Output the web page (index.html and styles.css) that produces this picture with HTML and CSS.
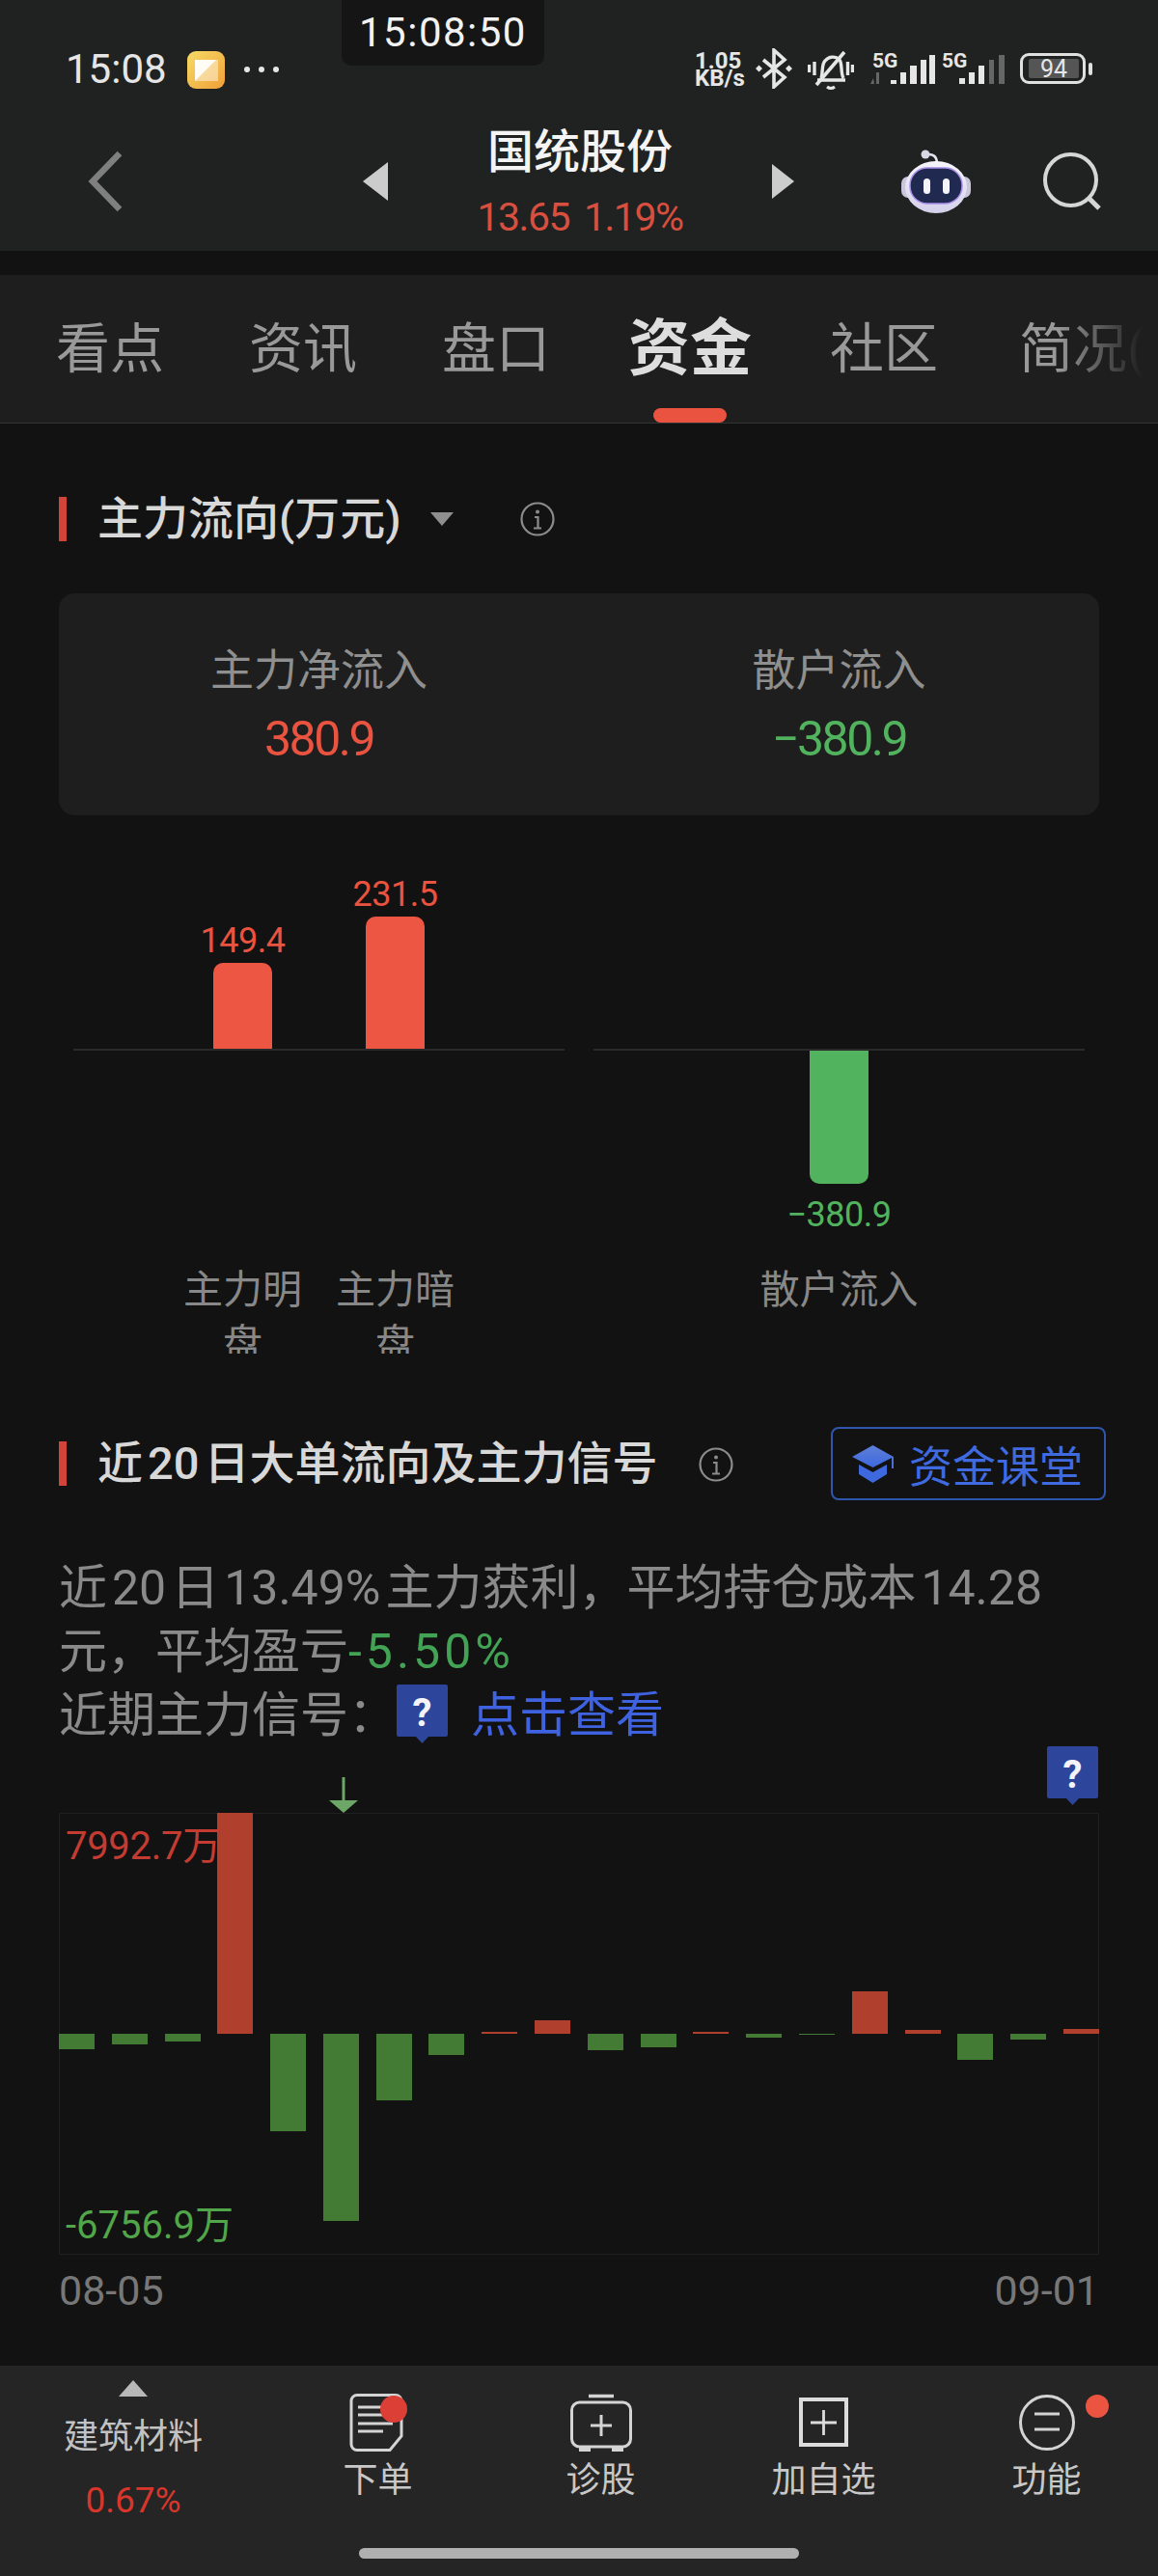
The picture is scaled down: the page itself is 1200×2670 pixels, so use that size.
FILE: index.html
```html
<!DOCTYPE html>
<html lang="zh-CN">
<head>
<meta charset="utf-8">
<title>国统股份</title>
<link rel="stylesheet" href="styles.css">
</head>
<body>
<div class="phone">
  <header class="top">
    <div class="clock-pill">15:08:50</div>
    <div class="status">
      <span class="status-time">15:08</span>
      <svg class="app-icon" width="39" height="39" viewBox="0 0 39 39">
        <defs><linearGradient id="appg" x1="0" y1="0" x2="1" y2="1"><stop offset="0" stop-color="#f7db66"/><stop offset="1" stop-color="#efa038"/></linearGradient></defs>
        <rect width="39" height="39" rx="9" fill="url(#appg)"/>
        <rect x="8" y="9" width="24" height="22" fill="#fff" fill-opacity=".45"/>
        <path d="M8 9h22L8 31z" fill="#fff" fill-opacity=".9"/>
      </svg>
      <span class="dots"><i></i><i></i><i></i></span>
      <div class="status-right">
        <span class="speed"><b>1.05</b><b>KB/s</b></span>
        <svg class="bt" width="38" height="42" viewBox="0 0 38 42" fill="none">
          <path d="M8 12l22 18-11 10V2l11 10L8 30" stroke="#e6e6e6" stroke-width="3.6"/>
          <path d="M3.500 17.500l3.500 3.500-3.500 3.500L0 21zM34.500 17.500l3.500 3.500-3.500 3.500-3.500-3.500z" fill="#e6e6e6"/>
        </svg>
        <svg class="bell" width="48" height="42" viewBox="0 0 48 42" fill="none" stroke="#e6e6e6" stroke-width="3.400">
          <path d="M14 29c2-5 0-14 4-18 4-5 11-5 15-1 3 4 1 14 4 19M10 31h29"/>
          <path d="M38 2L9 36" stroke-width="3.600"/>
          <path d="M1.500 15v8M7 12v14M41.500 12v14M46.500 15v8"/>
          <path d="M20 38q4 3 8 0" stroke-width="3"/>
        </svg>
        <svg class="signal" width="68" height="33" viewBox="0 0 68 33">
          <text x="3" y="16" class="fiveg">5G</text>
          <path d="M1 33l3-6 1 6zM7 21h3v12H7z" fill="#666"/>
          <path d="M22 29h6v4h-6zM32 21h6v12h-6zM42 14h7v19h-7zM53 8h6v25h-6zM62 3h6v30h-6z" fill="#e6e6e6"/>
        </svg>
        <svg class="signal second" width="68" height="33" viewBox="0 0 68 33">
          <text x="3" y="16" class="fiveg">5G</text>
          <path d="M21 27h6v6h-6zM31 21h6v12h-6zM41 14h6v19h-6z" fill="#e6e6e6"/>
          <path d="M52 8h5v25h-5zM62 3h6v30h-6z" fill="#666"/>
        </svg>
        <span class="battery"><span class="battery-fill">94</span></span>
        <i class="battery-nub"></i>
      </div>
    </div>
    <div class="stock-nav">
      <svg class="back" width="36" height="64" viewBox="0 0 36 64" fill="none"><path d="M33 3L5 32l28 29" stroke="#7f7f7f" stroke-width="6.500"/></svg>
      <i class="tri-left"></i>
      <div class="stock-title">
        <div class="stock-name">国统股份</div>
        <div class="stock-price"><span>13.65</span><span>1.19%</span></div>
      </div>
      <i class="tri-right"></i>
      <svg class="robot" width="72" height="66" viewBox="0 0 72 66">
        <defs><linearGradient id="helm" x1="0" y1="0" x2="0" y2="1"><stop offset="0" stop-color="#f6f5fc"/><stop offset="1" stop-color="#d3cfea"/></linearGradient></defs>
        <path d="M27 5q9-1 10 8" fill="none" stroke="#e4e3ee" stroke-width="2.500"/>
        <circle cx="25" cy="5" r="4.500" fill="#d8d7e4"/>
        <rect x="0" y="28" width="72" height="22" rx="7" fill="#c9c6dc"/>
        <ellipse cx="36" cy="39" rx="32" ry="27" fill="url(#helm)"/>
        <rect x="9" y="19" width="54" height="37" rx="18" fill="#20294f" stroke="#a88ee6" stroke-width="1.500"/>
        <rect x="23" y="30" width="7" height="16" rx="3.500" fill="#f3f3f8"/>
        <rect x="43" y="30" width="7" height="16" rx="3.500" fill="#f3f3f8"/>
      </svg>
      <svg class="search" width="60" height="60" viewBox="0 0 60 60" fill="none" stroke="#d6d6d6">
        <circle cx="28.500" cy="28.500" r="26.500" stroke-width="4"/>
        <path d="M47 47l11 11" stroke-width="5"/>
      </svg>
    </div>
  </header>

  <nav class="tabs">
    <a class="tab">看点</a>
    <a class="tab">资讯</a>
    <a class="tab">盘口</a>
    <a class="tab active">资金</a>
    <a class="tab">社区</a>
    <a class="tab last">简况(1)</a>
  </nav>

  <main class="content">
    <div class="section-head first">
      <i class="mark"></i>
      <h2 class="section-title large">主力流向(万元)</h2>
      <i class="caret"></i>
      <svg class="info" width="36" height="36" viewBox="0 0 36 36" fill="none" stroke="#8c8c8c" stroke-width="2.200">
        <circle cx="18" cy="18" r="16.500"/><path d="M15 16h3.500v11M14 27.500h8"/><circle cx="18" cy="10.500" r="2" fill="#8c8c8c" stroke="none"/>
      </svg>
    </div>

    <div class="summary">
      <div class="summary-col"><div class="summary-label">主力净流入</div><div class="summary-value red">380.9</div></div>
      <div class="summary-col"><div class="summary-label">散户流入</div><div class="summary-value green">−380.9</div></div>
    </div>

    <div class="flow-charts">
      <div class="panel">
        <div class="zone up">
          <div class="item"><span class="bar-value red">149.4</span><i class="flow-bar fill-red" style="height:89px"></i></div>
          <div class="item"><span class="bar-value red">231.5</span><i class="flow-bar fill-red" style="height:137px"></i></div>
        </div>
        <div class="axis"></div>
        <div class="zone down"></div>
        <div class="cats"><div class="cat">主力明盘</div><div class="cat">主力暗盘</div></div>
      </div>
      <div class="panel">
        <div class="zone up"></div>
        <div class="axis"></div>
        <div class="zone down">
          <div class="item"><i class="flow-bar neg fill-green" style="height:138px"></i><span class="bar-value green">−380.9</span></div>
        </div>
        <div class="cats"><div class="cat wide">散户流入</div></div>
      </div>
    </div>

    <div class="section-head second">
      <i class="mark"></i>
      <h2 class="section-title">近<span class="num-tight">20</span>日大单流向及主力信号</h2>
      <svg class="info spaced" width="36" height="36" viewBox="0 0 36 36" fill="none" stroke="#8c8c8c" stroke-width="2.200">
        <circle cx="18" cy="18" r="16.500"/><path d="M15 16h3.500v11M14 27.500h8"/><circle cx="18" cy="10.500" r="2" fill="#8c8c8c" stroke="none"/>
      </svg>
      <a class="course">
        <svg width="43" height="39" viewBox="0 0 43 39">
          <defs><linearGradient id="hat" x1="0" y1="0" x2="0" y2="1"><stop offset="0" stop-color="#5d80d8"/><stop offset="1" stop-color="#3e68de"/></linearGradient></defs>
          <path d="M21.500 0L43 12 21.500 23 0 12z" fill="url(#hat)"/>
          <path d="M7 20l14.500 8L36 20v10l-14.500 9L7 30z" fill="#3e68de"/>
          <path d="M42 12v12" stroke="#4a70d8" stroke-width="2"/>
        </svg>
        <span>资金课堂</span>
      </a>
    </div>

    <p class="signal-text">近<span class="num">20</span>日<span class="num">13.49%</span>主力获利，平均持仓成本<span class="num">14.28</span>元，平均盈亏<span class="deep-green">-5.50%</span><br>近期主力信号：<svg class="q-badge inline" width="53" height="61" viewBox="0 0 53 61"><path d="M2 0h49a2 2 0 0 1 2 2v50a2 2 0 0 1-2 2H33l-6.500 7-6.500-7H2a2 2 0 0 1-2-2V2a2 2 0 0 1 2-2z" fill="#2d459b"/><text x="26.500" y="43" class="q-mark">?</text></svg><a class="link">点击查看</a></p>

    <div class="plot">
      <svg class="arrow-mark" width="30" height="37" viewBox="0 0 30 37"><path d="M15 0v26" stroke="#6da768" stroke-width="3"/><path d="M0 24h30L15 37z" fill="#6da768"/></svg>
      <svg class="q-badge pinned" width="53" height="61" viewBox="0 0 53 61"><path d="M2 0h49a2 2 0 0 1 2 2v50a2 2 0 0 1-2 2H33l-6.500 7-6.500-7H2a2 2 0 0 1-2-2V2a2 2 0 0 1 2-2z" fill="#2d459b"/><text x="26.500" y="43" class="q-mark">?</text></svg>
      <span class="plot-label max">7992.7万</span>
      <span class="plot-label min">-6756.9万</span>
      <div class="bars">
        <div class="col neg"><i class="bar g" style="height:16px"></i></div>
        <div class="col neg"><i class="bar g" style="height:11px"></i></div>
        <div class="col neg"><i class="bar g" style="height:8px"></i></div>
        <div class="col pos"><i class="bar r" style="height:229px"></i></div>
        <div class="col neg"><i class="bar g" style="height:101px"></i></div>
        <div class="col neg"><i class="bar g" style="height:194px"></i></div>
        <div class="col neg"><i class="bar g" style="height:69px"></i></div>
        <div class="col neg"><i class="bar g" style="height:22px"></i></div>
        <div class="col pos"><i class="bar r" style="height:2px"></i></div>
        <div class="col pos"><i class="bar r" style="height:14px"></i></div>
        <div class="col neg"><i class="bar g" style="height:17px"></i></div>
        <div class="col neg"><i class="bar g" style="height:14px"></i></div>
        <div class="col pos"><i class="bar r" style="height:2px"></i></div>
        <div class="col neg"><i class="bar g" style="height:4px"></i></div>
        <div class="col neg"><i class="bar g" style="height:1px"></i></div>
        <div class="col pos"><i class="bar r" style="height:44px"></i></div>
        <div class="col pos"><i class="bar r" style="height:4px"></i></div>
        <div class="col neg"><i class="bar g" style="height:27px"></i></div>
        <div class="col neg"><i class="bar g" style="height:6px"></i></div>
        <div class="col pos"><i class="bar r" style="height:5px"></i></div>
      </div>
    </div>
    <div class="dates"><span>08-05</span><span>09-01</span></div>
  </main>

  <footer class="bottom">
    <div class="bottom-row">
      <div class="sector">
        <i class="tri-up"></i>
        <div class="sector-name">建筑材料</div>
        <div class="sector-change">0.67%</div>
      </div>
      <a class="action">
        <svg class="action-icon" width="60" height="60" viewBox="0 0 60 60" fill="none" stroke="#d4d4d4">
          <path d="M8 1.500h40a6 6 0 0 1 6 6V44L42 58.500H8a6 6 0 0 1-6-6v-45a6 6 0 0 1 6-6z" stroke-width="3"/>
          <path d="M9 14h36M9 22h36M9 31h36M9 39h26" stroke-width="2.800"/>
          <circle cx="46" cy="16" r="14" fill="#db3f36" stroke="none"/>
        </svg>
        <span>下单</span>
      </a>
      <a class="action">
        <svg class="action-icon" width="64" height="60" viewBox="0 0 64 60" fill="none" stroke="#d4d4d4">
          <path d="M19 2.500h26" stroke-width="3.500"/>
          <rect x="1.500" y="9" width="61" height="46" rx="8" stroke-width="3"/>
          <path d="M32 22v22M21 33h22" stroke-width="3"/>
          <path d="M9 58h12M43 58h12" stroke-width="4"/>
        </svg>
        <span>诊股</span>
      </a>
      <a class="action">
        <svg class="action-icon" width="51" height="60" viewBox="0 0 51 60" fill="none" stroke="#dcdcdc">
          <rect x="2" y="6" width="47" height="47" stroke-width="4"/>
          <path d="M25.500 17v26M12 30h27" stroke-width="2.800"/>
        </svg>
        <span>加自选</span>
      </a>
      <a class="action notify">
        <svg class="action-icon" width="58" height="60" viewBox="0 0 58 60" fill="none" stroke="#d4d4d4">
          <circle cx="29" cy="30" r="27.500" stroke-width="3"/>
          <path d="M16 21h26M16 37h26" stroke-width="3"/>
        </svg>
        <i class="dot"></i>
        <span>功能</span>
      </a>
    </div>
    <div class="home-indicator"></div>
  </footer>
</div>
</body>
</html>
```
FILE: styles.css
```css
* { box-sizing: border-box; }
html, body { margin: 0; padding: 0; background: #121212; }
body { font-family: Roboto, "Noto Sans CJK SC", sans-serif; }
a { display: block; }
i { display: block; }

.phone { width: 1200px; height: 2670px; display: flex; flex-direction: column; position: relative; overflow: hidden; background: #121212; }

/* header */
.top { height: 260px; background: #202222; flex: none; position: relative; }
.clock-pill { position: absolute; left: 354px; top: 0; width: 210px; height: 68px; background: #151515; border-radius: 0 0 10px 10px; color: #f2f2f2; font-size: 42px; line-height: 68px; text-align: center; letter-spacing: 1.500px; }
.status { height: 124px; padding: 52px 68px 0 68px; display: flex; align-items: flex-start; }
.status-time { font-size: 42px; line-height: 40px; color: #e6e6e6; width: 126px; flex: none; }
.app-icon { flex: none; margin-top: 1px; }
.dots { display: flex; gap: 9px; margin: 17px 0 0 20px; }
.dots i { width: 6px; height: 6px; border-radius: 50%; background: #e6e6e6; }
.status-right { margin-left: auto; display: flex; align-items: flex-start; }
.speed { display: flex; flex-direction: column; width: 52px; color: #e6e6e6; font-size: 24px; line-height: 18px; margin-top: 2px; white-space: nowrap; }
.speed b { display: block; font-weight: 700; }
.bt { margin: -2px 0 0 11px; }
.bell { margin: 0 0 0 16px; }
.signal { margin: 2px 0 0 16px; }
.signal.second { margin-left: 4px; }
.fiveg { font: 700 21px Roboto, sans-serif; fill: #e6e6e6; }
.battery { margin: 3px 0 0 16px; width: 68px; height: 32px; border: 3px solid #e0e0e0; border-radius: 9px; padding: 3px 6px; }
.battery-fill { display: block; width: 52px; height: 20px; background: #555; color: #e6e6e6; font-size: 25px; line-height: 21px; text-align: center; border-radius: 2px; }
.battery-nub { width: 4px; height: 13px; background: #e0e0e0; border-radius: 2px; margin: 13px 0 0 3px; }

.stock-nav { height: 136px; padding-bottom: 8px; display: flex; align-items: center; padding-left: 91px; }
.back { flex: none; }
.tri-left { margin-left: 249px; width: 0; height: 0; border-style: solid; border-width: 20px 26px 20px 0; border-color: transparent #cccccc transparent transparent; flex: none; }
.stock-title { width: 398px; flex: none; text-align: center; }
.stock-name { font-size: 48px; line-height: 62px; font-weight: 500; color: #f4f4f4; margin-top: 5px; }
.stock-price { margin-top: 6px; font-size: 41px; line-height: 60px; color: #d84f3f; display: flex; justify-content: center; gap: 15px; letter-spacing: -1.500px; }
.tri-right { width: 0; height: 0; border-style: solid; border-width: 18px 0 18px 23px; border-color: transparent transparent transparent #cccccc; flex: none; }
.robot { margin-left: 111px; flex: none; }
.search { margin-left: 75px; flex: none; }

/* tabs */
.tabs { margin-top: 25px; height: 154px; flex: none; background: #1e1e1e; border-bottom: 1px solid #333; display: flex; gap: 88px; padding-left: 58px; position: relative; overflow: hidden; white-space: nowrap; }
.tabs::after { content: ""; position: absolute; right: 0; top: 0; bottom: 0; width: 105px; background: linear-gradient(to right, rgba(30,30,30,0), #1e1e1e 85%); }
.tab { font-size: 56px; line-height: 90px; padding-top: 32px; color: #999; position: relative; height: 153px; flex: none; }
.tab.last { margin-left: -4px; }
.tab.active { font-size: 64px; font-weight: 700; color: #ddd; margin: 0 -7px; }
.tab.active::after { content: ""; position: absolute; left: 26px; width: 76px; height: 15px; bottom: 0; background: #e95340; border-radius: 8px; }

/* content */
.content { flex: 1; padding: 76px 61px 0; }
.section-head { display: flex; align-items: center; }
.section-head.first { height: 46px; }
.section-head.second { height: 76px; margin-top: 76px; }
.mark { width: 8px; height: 46px; background: #d2443a; flex: none; }
.section-title { margin: 0 0 0 32px; font-size: 47px; line-height: 46px; font-weight: 500; color: #d8d8d8; white-space: nowrap; }
.section-title.large { margin-left: 32px; }
.num-tight { margin: 0 5px; }
.caret { margin-left: 30px; width: 0; height: 0; border-style: solid; border-width: 14px 12px 0; border-color: #8f8f8f transparent transparent; flex: none; }
.info { margin-left: 69px; flex: none; }
.info.spaced { margin-left: 43px; margin-top: 2px; }
.course { margin-left: auto; margin-right: -7px; width: 285px; height: 76px; border: 2px solid #2f56ac; border-radius: 8px; display: flex; align-items: center; padding-left: 20px; gap: 16px; color: #3f6ae0; font-size: 45px; flex: none; }

.summary { margin-top: 54px; height: 230px; background: #1e1e1e; border-radius: 16px; display: grid; grid-template-columns: 1fr 1fr; text-align: center; padding-top: 59px; }
.summary-label { font-size: 45px; line-height: 44px; color: #8f8f8f; }
.summary-value { margin-top: 23px; font-size: 50px; line-height: 50px; letter-spacing: -2.500px; }
.red { color: #e95340; }
.green { color: #52b35f; }

.flow-charts { display: grid; grid-template-columns: 509px 509px; gap: 30px; padding-left: 15px; }
.zone { display: flex; justify-content: center; }
.zone.up { height: 242px; align-items: flex-end; }
.zone.down { height: 217px; align-items: flex-start; }
.axis { height: 2px; background: #2a2a2a; }
.item { width: 158px; display: flex; flex-direction: column; align-items: center; }
.flow-bar { width: 61px; border-radius: 10px 10px 0 0; margin-top: 3px; }
.flow-bar.neg { border-radius: 0 0 10px 10px; margin-top: 0; }
.fill-red { background: #ec5643; }
.fill-green { background: #52b35f; }
.bar-value { font-size: 36px; line-height: 40px; letter-spacing: -.5px; }
.flow-bar.neg + .bar-value { margin-top: 12px; }
.cats { display: flex; justify-content: center; height: 97px; overflow: hidden; padding-top: 3px; }
.cat { width: 158px; font-size: 41px; line-height: 56px; color: #888; text-align: center; }
.cat.wide { width: auto; white-space: nowrap; }

.signal-text { margin: 58px 0 0 0; font-size: 50px; line-height: 66px; color: #8a8a8a; height: 198px; }
.num { margin: 0 5px; }
.deep-green { color: #43a355; letter-spacing: 4px; }
.link { display: inline; color: #3f62e0; }
.q-badge { display: block; }
.q-badge.inline { display: inline-block; vertical-align: top; margin: 1px 24px 0 0; }
.q-mark { font: 700 40px Roboto, sans-serif; fill: #f4f4f8; text-anchor: middle; }

.plot { margin-top: 68px; height: 458px; position: relative; box-shadow: inset 0 0 0 1px #1f1f1f; }
.arrow-mark { position: absolute; left: 280px; top: -37px; }
.q-badge.pinned { position: absolute; right: 1px; top: -69px; }
.plot-label { position: absolute; left: 7px; font-size: 40px; line-height: 40px; white-space: nowrap; }
.plot-label.max { top: 15px; color: #c43c31; z-index: 1; letter-spacing: -.3px; }
.plot-label.min { top: 408px; color: #52a64a; }
.bars { display: flex; justify-content: space-between; height: 100%; }
.col { width: 37px; display: flex; flex-direction: column; }
.col.pos { padding-bottom: 229px; justify-content: flex-end; }
.col.neg { padding-top: 229px; }
.bar.r { background: #b03f2e; }
.bar.g { background: #437b35; }

.dates { margin-top: 17px; display: flex; justify-content: space-between; font-size: 43px; line-height: 40px; color: #777; }

/* bottom */
.bottom { height: 218px; flex: none; background: #252525; }
.bottom-row { display: flex; height: 189px; }
.sector { width: 276px; flex: none; display: flex; flex-direction: column; align-items: center; padding-top: 15px; }
.tri-up { width: 0; height: 0; border-style: solid; border-width: 0 15px 17px; border-color: transparent transparent #b8b8b8; }
.sector-name { margin-top: 20px; font-size: 36px; line-height: 44px; color: #c2c2c2; }
.sector-change { margin-top: 22px; font-size: 37px; line-height: 44px; color: #d9362b; }
.action { width: 231px; flex: none; display: flex; flex-direction: column; align-items: center; padding-top: 29px; position: relative; color: #c8c8c8; font-size: 36px; line-height: 40px; }
.action-icon { flex: none; overflow: visible; }
.action span { margin-top: 10px; }
.dot { position: absolute; left: 156px; top: 30px; width: 24px; height: 24px; border-radius: 50%; background: #eb5441; }
.home-indicator { width: 456px; height: 11px; margin: 0 auto; background: #b0b0b0; border-radius: 6px; }
```
